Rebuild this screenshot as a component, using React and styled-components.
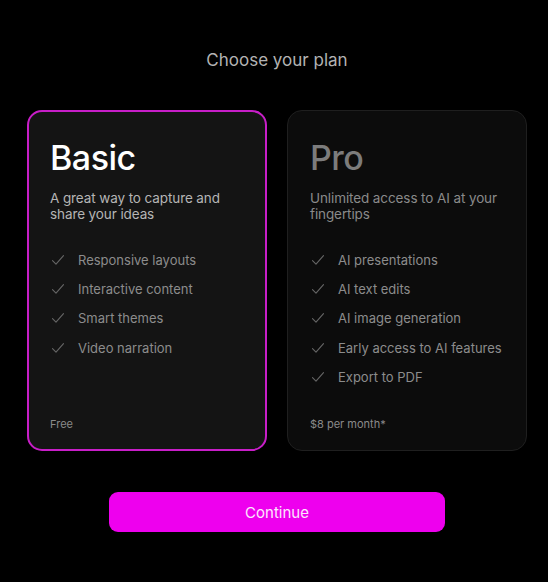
import React, { useState } from "react";
import styled, { createGlobalStyle, css } from "styled-components";

const plans = [
  {
    id: "basic",
    name: "Basic",
    description: "A great way to capture and share your ideas",
    features: [
      "Responsive layouts",
      "Interactive content",
      "Smart themes",
      "Video narration",
    ],
    price: "Free",
  },
  {
    id: "pro",
    name: "Pro",
    description: "Unlimited access to AI at your fingertips",
    features: [
      "AI presentations",
      "AI text edits",
      "AI image generation",
      "Early access to AI features",
      "Export to PDF",
    ],
    price: "$8 per month*",
  },
];

const Check = () => (
  <CheckIcon viewBox="0 0 16 16" fill="none">
    <path
      d="M2.5 8.6 L6 12.2 L13.5 3.6"
      stroke="currentColor"
      strokeWidth="1.1"
      strokeLinecap="round"
      strokeLinejoin="round"
    />
  </CheckIcon>
);

const App = () => {
  const [selected, setSelected] = useState("basic");

  return (
    <Wrapper>
      <GlobalStyle />
      <Heading>Choose your plan</Heading>
      <Cards>
        {plans.map((plan) => {
          const active = plan.id === selected;
          return (
            <Card key={plan.id} $active={active} onClick={() => setSelected(plan.id)}>
              <PlanName $active={active}>{plan.name}</PlanName>
              <Description $active={active}>{plan.description}</Description>
              <Features>
                {plan.features.map((item) => (
                  <Feature key={item}>
                    <Check />
                    {item}
                  </Feature>
                ))}
              </Features>
              <Price>{plan.price}</Price>
            </Card>
          );
        })}
      </Cards>
      <ContinueButton type="button">Continue</ContinueButton>
    </Wrapper>
  );
};

export default App;

const GlobalStyle = createGlobalStyle`
  * { box-sizing: border-box; }
  html, body {
    margin: 0;
    background: #000000;
  }
  body {
    font-family: Inter, "Noto Sans", "Liberation Sans", sans-serif;
    -webkit-font-smoothing: antialiased;
  }
`;

const Wrapper = styled.div`
  width: 548px;
  min-height: 582px;
  display: flex;
  flex-direction: column;
  align-items: center;
  padding: 50px 0 0 6px;
  background: #000000;
`;

const Heading = styled.h1`
  margin: 0;
  font-size: 17px;
  line-height: 20px;
  font-weight: 400;
  color: #b3b3b3;
`;

const Cards = styled.div`
  display: flex;
  gap: 20px;
  margin-top: 40px;
`;

const Card = styled.div`
  width: 240px;
  height: 341px;
  display: flex;
  flex-direction: column;
  border-radius: 15px;
  cursor: pointer;
  ${({ $active }) =>
    $active
      ? css`
          background: #141414;
          border: 2px solid #c81ec8;
          padding: 26px 21px 18px;
        `
      : css`
          background: #0c0c0c;
          border: 1px solid #1f1f1f;
          padding: 27px 22px 19px;
        `}
`;

const PlanName = styled.h2`
  margin: 0;
  font-size: 34px;
  line-height: 40px;
  font-weight: 500;
  letter-spacing: -0.5px;
  color: ${({ $active }) => ($active ? "#ffffff" : "#7c7c7c")};
`;

const Description = styled.p`
  margin: 12px 0 0;
  font-size: 13.5px;
  line-height: 16px;
  letter-spacing: -0.1px;
  color: ${({ $active }) => ($active ? "#b5b5b5" : "#8a8a8a")};
`;

const Features = styled.ul`
  list-style: none;
  margin: 23px 0 0;
  padding: 0;
`;

const Feature = styled.li`
  display: flex;
  align-items: center;
  gap: 12px;
  height: 29.4px;
  font-size: 13px;
  white-space: nowrap;
  color: #8c8c8c;
`;

const CheckIcon = styled.svg`
  width: 16px;
  height: 16px;
  flex-shrink: 0;
  color: #666666;
`;

const Price = styled.div`
  margin-top: auto;
  font-size: 11px;
  line-height: 14px;
  color: #8a8a8a;
`;

const ContinueButton = styled.button`
  margin-top: 41px;
  width: 336px;
  height: 40px;
  border: none;
  border-radius: 9px;
  background: #ee00ee;
  color: #fde6fd;
  font-family: inherit;
  font-size: 15px;
  font-weight: 400;
  cursor: pointer;
`;
